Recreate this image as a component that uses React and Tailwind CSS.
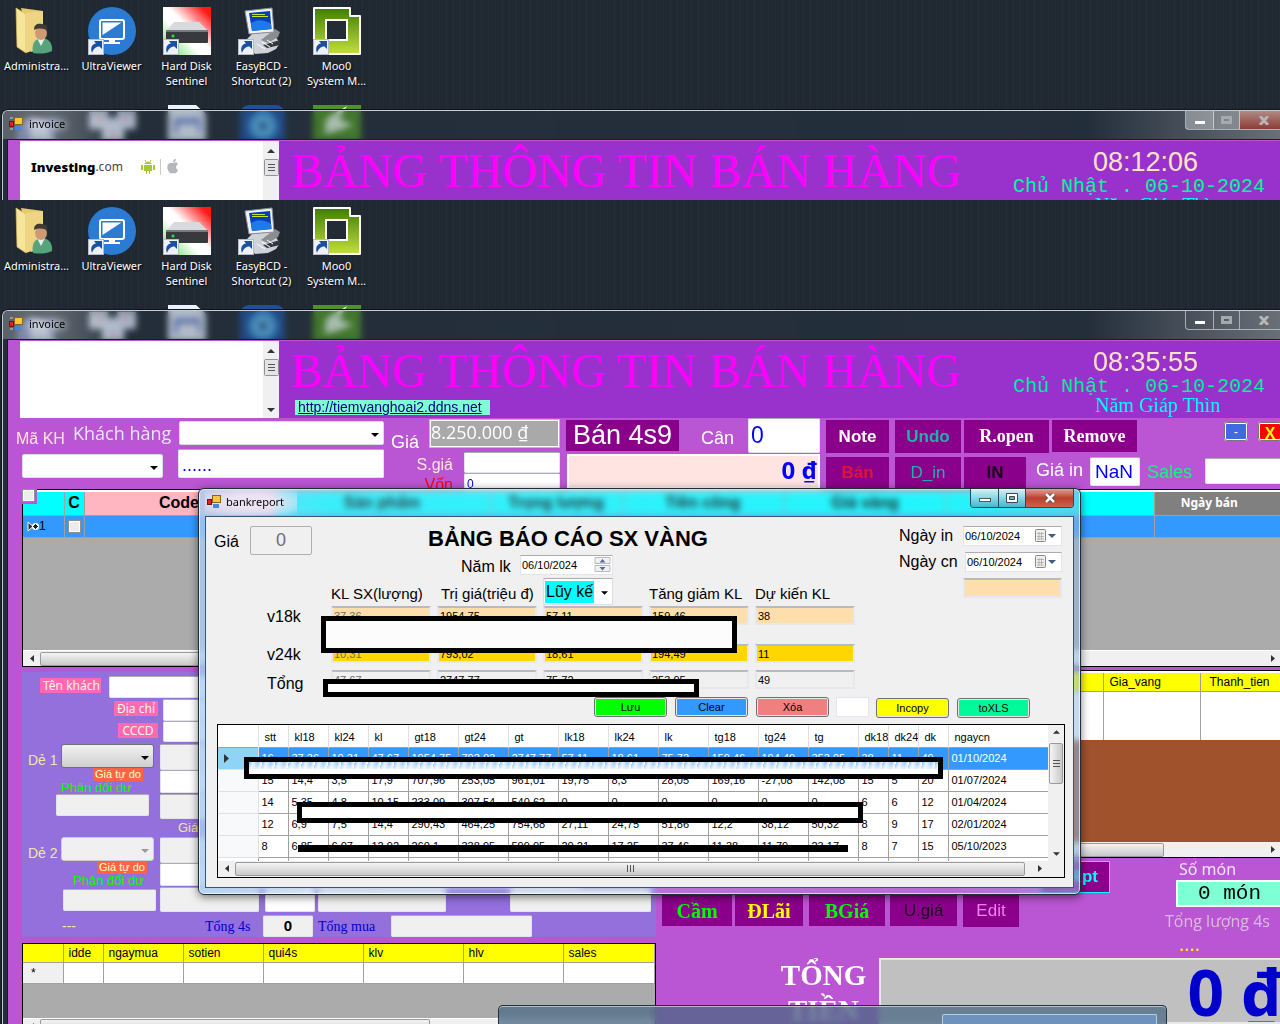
import React from "react";

const SANS = "font-['Liberation_Sans',Arial,sans-serif]";
const FIELD = "min-w-0 rounded-[2px] border border-[#e3e3ec] border-t-[#abadb3] outline-none";

function ShortcutArrow() {
  return (
    <g>
      <rect x="0.5" y="32.5" width="15" height="15" fill="#eef2f8" stroke="#b6bcc6" />
      <path d="M4 46c-2-5 0-9 4-9.500l-2-2.500h8v8l-2.500-2.500c-4 0-6 2.500-7.500 6.500z" fill="#1d4fa0" />
    </g>
  );
}

function FolderIcon() {
  return (
    <svg viewBox="0 0 48 48" className="size-12">
      <path d="M8 1l22 3v38l-12 3z" fill="#e8ca6c" />
      <path d="M3 1l10 6v39L4 40z" fill="#f8e59c" stroke="#d9b95a" strokeWidth=".7" />
      <path d="M13 6l17-2v36l-17 6z" fill="#eed583" />
      <path d="M20 46c-2-10 3-15 9-15s11 5 10 13c-6 3-13 3-19 2z" fill="#57a37c" />
      <path d="M24 31l4 8 4-8z" fill="#e8efe9" />
      <ellipse cx="28" cy="26" rx="6" ry="7" fill="#cf9a72" />
      <path d="M21 23c0-6 4-7 8-6 4 0 6 3 5 7-3-3-9-3-13-1z" fill="#3f3c38" />
    </svg>
  );
}

function ViewerIcon() {
  return (
    <svg viewBox="0 0 48 48" className="size-12">
      <circle cx="24" cy="24" r="24" fill="#2b7bd3" />
      <rect x="12" y="13" width="24" height="19" rx="2" fill="#2b7bd3" stroke="#fff" strokeWidth="2" />
      <path d="M14.500 15.500h19L14.500 28z" fill="#fff" />
      <path d="M21 32h6v3h5v2H16v-2h5z" fill="#fff" />
      <ShortcutArrow />
    </svg>
  );
}

function DiskIcon({ id }) {
  return (
    <svg viewBox="0 0 48 48" className="size-12">
      <defs>
        <linearGradient id={id} x1="0" y1="1" x2="1" y2="0">
          <stop offset="0" stopColor="#4de04d" />
          <stop offset=".4" stopColor="#fff" />
          <stop offset=".55" stopColor="#fff" />
          <stop offset=".9" stopColor="#ff1818" />
        </linearGradient>
      </defs>
      <rect width="48" height="48" fill={`url(#${id})`} />
      <path d="M11 15h25l9 9H3z" fill="#d8dadd" />
      <rect x="3" y="23" width="42" height="13" rx="1" fill="#37393c" />
      <rect x="3" y="23" width="42" height="2" fill="#777b80" />
      <circle cx="10" cy="29" r="1.500" fill="#25e83c" />
      <ShortcutArrow />
    </svg>
  );
}

function PcIcon() {
  return (
    <svg viewBox="0 0 48 48" className="size-12">
      <path d="M7 34l7-7 20-2 8 11-4 6-8 4-13 1z" fill="#cfd2d8" />
      <path d="M23 33l14-11 5 3-2 5-10 6z" fill="#8b8d90" />
      <path d="M25 38l17-5v5l-13 3z" fill="#34373c" />
      <path d="M7 4l27-3 2 24-25 2z" fill="#f0f2f6" stroke="#8c9098" />
      <path d="M11 6l21-2 1.500 18-19.500 2z" fill="#0b3fb4" />
      <path d="M13 16q9-6 20 1l.500 5-19.500 2z" fill="#1c7be8" />
      <path d="M14 9.500h16M14 7.500h13" stroke="#c9e23a" strokeWidth="1.200" />
      <path d="M19 37l8 5M24 35l8 5M29 33l6 4" stroke="#fff" />
      <ShortcutArrow />
    </svg>
  );
}

function MooIcon({ id }) {
  return (
    <svg viewBox="0 0 48 48" className="size-12">
      <defs>
        <linearGradient id={id} x1="0" y1="0" x2="0" y2="1">
          <stop offset="0" stopColor="#3f7d06" />
          <stop offset="1" stopColor="#c3e03c" />
        </linearGradient>
      </defs>
      <path d="M1 1h36v8h10v38H11V36H1z" fill={`url(#${id})`} stroke="#fff" strokeWidth="2" strokeLinejoin="round" />
      <rect x="13" y="13" width="21" height="20" fill="#222b36" stroke="#fff" strokeWidth="2" />
      <ShortcutArrow />
    </svg>
  );
}

/* Icons of the second desktop row, partly hidden by the window's title bar. */
function LowerIcons() {
  return (
    <svg width="380" height="36" viewBox="0 0 380 36" aria-hidden="true">
      <path d="M20 14h38l-4 22H16z" fill="#7f8fd6" opacity=".75" />
      <path d="M30 12l14 4 10 20H30z" fill="#dfe6fb" opacity=".8" />
      <path d="M89 7h19v6h9V7h19v17h-12v12h-22V24H89z" fill="#dfe9fb" />
      <path d="M96 14h8M121 14h8M109 30h8" stroke="#e89aab" strokeWidth="3" />
      <path d="M168 0h28l10 9v27h-38z" fill="#eaf2ff" />
      <path d="M174 13h27v16h-27z" fill="#7f95d6" />
      <path d="M178 19h20v10h-20z" fill="#eef3fd" />
      <rect x="240" y="0" width="45" height="44" rx="9" fill="#1f4f9e" />
      <circle cx="263" cy="21" r="15" fill="#3c9be0" />
      <circle cx="263" cy="21" r="7" fill="none" stroke="#86cff5" strokeWidth="3" />
      <circle cx="263" cy="21" r="3" fill="#1c4a78" />
      <rect x="313" y="0" width="48" height="40" fill="#4f9420" />
      <path d="M347 1l-8 13 14 6-13 5-15 4 1-15z" fill="#e3fbe0" />
    </svg>
  );
}

function Desktop({ children, className, id, time, closeStyle, logo }) {
  const icons = [
    [["Administra..."], <FolderIcon key="f" />],
    [["UltraViewer"], <ViewerIcon key="v" />],
    [["Hard Disk", "Sentinel"], <DiskIcon key="d" id={id + "disk"} />],
    [["EasyBCD -", "Shortcut (2)"], <PcIcon key="p" />],
    [["Moo0", "System M..."], <MooIcon key="m" id={id + "moo"} />],
  ];
  return (
    <section
      className={`relative overflow-hidden bg-[repeating-linear-gradient(90deg,#1f2831_0px,#222b35_2px,#1d252e_3px,#242d37_5px,#1f2831_7px)] ${className}`}
    >
      <div className="-ml-px flex pt-[7px]">
        {icons.map(([lines, icon]) => (
          <div key={lines[0]} className="flex w-[75px] flex-col items-center">
            {icon}
            <span className="mt-[3px] text-center font-['Noto_Sans',sans-serif] text-[11px] leading-[15px] whitespace-nowrap text-white [text-shadow:1px_1px_2px_#000]">
              {lines.map((l) => (<span key={l} className="block">{l}</span>))}
            </span>
          </div>
        ))}
      </div>
      <div className="absolute top-[105px] left-0">
        <LowerIcons />
      </div>
      <div className="absolute top-[110px] right-0 bottom-0 left-[2px] flex flex-col rounded-tl-md border-t border-l border-[#c5ccd2] bg-[#2b3b4b]/30 pl-[4px] shadow-[0_0_0_1px_#10151b] backdrop-blur-[3px]">
        <header className="-ml-[4px] flex h-[28px] shrink-0 items-start rounded-tl-md bg-[linear-gradient(90deg,#ffffff40,#ffffff48_50px,#2d425500_130px,#22324022_85%,#ffffff50)] pl-[6px]">
          <svg width="14" height="14" viewBox="0 0 14 14" className="mt-[6px]" aria-hidden="true">
            <rect x="5.500" y=".5" width="8" height="7" fill="#f6c63c" stroke="#8d6414" />
            <rect x=".5" y="4.500" width="4" height="5" fill="#d22" stroke="#711" />
            <rect x="6" y="9" width="6" height="4" fill="#4a83e0" />
            <path d="M1 1h3M1 12h3" stroke="#ccc" />
          </svg>
          <h2 className="mt-[5px] ml-[6px] font-['Noto_Sans',sans-serif] text-[11px] leading-4 text-black [text-shadow:0_0_8px_#fff,0_0_8px_#fff]">
            invoice
          </h2>
          <div className="-mr-2 ml-auto flex h-[19px] rounded-b-[4px] border border-t-0 border-[#d0d5da]/70">
            <button aria-label="Minimize" className={`flex w-7 items-end justify-center border-r border-white/50 pb-[5px] ${closeStyle ? "bg-white/35" : ""}`}>
              <span className="h-[3px] w-[10px] bg-white" />
            </button>
            <button aria-label="Maximize" className={`flex w-[26px] items-center justify-center border-r border-white/50 ${closeStyle ? "bg-white/25" : ""}`}>
              <span className="h-2 w-[11px] border-[3px] border-[#a4aab0]" />
            </button>
            <button aria-label="Close" className={`flex w-[47px] items-center justify-center ${closeStyle}`}>
              <svg width="12" height="9" viewBox="0 0 12 9"><path d="M2 0l8 9M10 0L2 9" stroke="#b8b4b6" strokeWidth="3" /></svg>
            </button>
          </div>
        </header>
        <div className="flex min-h-0 flex-1 flex-col border-t border-l border-[#1b1b2b] bg-[#ba55d3] pt-px">
          <div className="flex h-[77px] shrink-0 pl-3">
            <div className="flex w-[259px] shrink-0 bg-white">
              <div className="flex-1">{logo}</div>
              <div className="flex w-4 flex-col items-center bg-[#f0f0f0] py-[5px]">
                <svg width="8" height="5" viewBox="0 0 8 5" className="mt-[2px]"><path d="M0 5l4-4 4 4z" fill="#333" /></svg>
                <svg width="15" height="17" viewBox="0 0 15 17" className="mt-[6px]">
                  <rect x=".5" y=".5" width="14" height="16" rx="1" fill="#e4e4e6" stroke="#929292" />
                  <path d="M4 5.500h7M4 8.500h7M4 11.500h7" stroke="#555" />
                </svg>
                <svg width="8" height="5" viewBox="0 0 8 5" className="mt-auto"><path d="M0 0h8L4 4z" fill="#333" /></svg>
              </div>
            </div>
            <div className="flex min-w-0 flex-1 bg-[#9932cc] pl-3">
              <div className="shrink-0">
                <h1 className="font-['Liberation_Serif',serif] text-[48px] leading-[59px] whitespace-nowrap text-[#ff00ff]">BẢNG THÔNG TIN BÁN HÀNG</h1>
                <a href="http://tiemvanghoai2.ddns.net" className={`ml-1 block w-[195px] bg-[#7fffd4] pl-[3px] text-sm leading-[15px] text-[#000080] underline ${SANS}`}>
                  http://tiemvanghoai2.ddns.net
                </a>
              </div>
              <div className="ml-auto w-[267px] shrink-0 whitespace-nowrap">
                <p className={`pt-[6px] pl-20 text-[27px] leading-[30px] text-[#ffe4c4] ${SANS}`}>{time}</p>
                <p className="font-['Liberation_Mono',monospace] text-[20px] leading-[19px] text-[#00fa9a]">Chủ Nhật . 06-10-2024</p>
                <p className="pl-[82px] font-['Liberation_Serif',serif] text-[20px] leading-[18px] text-[#00ffff]">Năm Giáp Thìn</p>
              </div>
            </div>
          </div>
          {children}
        </div>
      </div>
    </section>
  );
}

function InvestingLogo() {
  return (
    <div className="flex items-center pt-[14px] pl-[11px]">
      <span className="font-['Noto_Sans',sans-serif] text-[13px] leading-[24px] font-black text-black">Investing</span>
      <span className="font-['Noto_Sans',sans-serif] text-[12px] leading-6 text-[#444]">.com</span>
      <svg width="40" height="16" viewBox="0 0 40 16" className="ml-[18px]" aria-hidden="true">
        <path d="M3 5q4-5 8 0zM3 6h8v6H9v3H8v-3H6v3H5v-3H3zM0 6h2v5H0zM12 6h2v5h-2z" fill="#a4c639" />
        <path d="M4 1l1 2M10 1L9 3" stroke="#a4c639" />
        <path d="M19.500 0v16" stroke="#ccc" />
        <path d="M32 4c2-1 4-1 5 1-3 2-2 5 0 6-1 3-3 4-5 3-2 1-4 0-5-3-2-5 1-8 5-7zM32 3c0-2 1-3 3-3 0 2-1 3-3 3z" fill="#b4b8bc" />
      </svg>
    </div>
  );
}

function Drop({ label, className, arrow = "#000", children, disabled }) {
  return (
    <div className={`relative ${className}`}>
      <select aria-label={label} disabled={disabled} className="absolute inset-0 h-full w-full appearance-none bg-transparent pl-1 outline-none">
        {children || <option></option>}
      </select>
      <svg width="8" height="4" viewBox="0 0 8 4" className="pointer-events-none absolute top-1/2 right-1"><path d="M0 0h8L4 4z" fill={arrow} /></svg>
    </div>
  );
}

function HScroll({ thumb, left = true, right = true, grip }) {
  return (
    <div className="flex h-[15px] shrink-0 items-center bg-[#f0f0f0]">
      <span className="flex w-[17px] shrink-0 justify-center">
        {left && <svg width="4" height="7" viewBox="0 0 4 7"><path d="M4 0v7L0 3.500z" fill="#333" /></svg>}
      </span>
      <div className={`flex h-[14px] items-center justify-center rounded-[2px] border border-[#9a9a9a] bg-linear-to-b from-[#f4f4f4] to-[#c9c9cb] ${thumb}`}>
        {grip && <svg width="7" height="7" viewBox="0 0 7 7"><path d="M.5 0v7M3.500 0v7M6.500 0v7" stroke="#555" /></svg>}
      </div>
      <span className="ml-auto flex w-[15px] shrink-0 justify-center">
        {right && <svg width="4" height="7" viewBox="0 0 4 7"><path d="M0 0v7l4-3.500z" fill="#333" /></svg>}
      </span>
    </div>
  );
}

const TOOL = "flex items-center justify-center bg-[#8b008b] whitespace-nowrap";

function Toolbar() {
  return (
    <div className={`flex h-[71px] shrink-0 pl-2 ${SANS}`}>
      <div className="w-[368px] shrink-0">
        <div className="flex h-[31px] items-start pt-[3px]">
          <label className="w-[57px] pt-[9px] text-[16px] leading-[18px] text-[#ffe4e1]">Mã KH</label>
          <label className="w-[106px] pt-[2px] font-['Open_Sans',sans-serif] text-[18px] leading-[20px] whitespace-nowrap text-[#e6e6fa]">Khách hàng</label>
          <Drop label="Khách hàng" className="h-6 flex-1 rounded-[2px] border border-[#dcdce6] bg-white" />
        </div>
        <div className="flex pl-[6px]">
          <Drop label="Mã KH" className="mt-[5px] h-6 w-[141px] rounded-[2px] border border-[#dcdce6] bg-white" />
          <input aria-label="Ghi chú" defaultValue="......" className={`ml-[15px] h-[29px] flex-1 bg-white pt-[4px] pl-[3px] text-[18px] text-[#0000ff] ${FIELD}`} />
        </div>
      </div>
      <div className="ml-[7px] w-[169px] shrink-0">
        <div className="flex pt-px">
          <label htmlFor="gia" className="w-[38px] pt-[13px] text-[18px] leading-5 text-white">Giá</label>
          <input id="gia" defaultValue="8.250.000 ₫" className="h-[29px] min-w-0 flex-1 border-2 border-white bg-[#a9a9a9] pb-[3px] font-['Open_Sans','Noto_Sans',sans-serif] text-[18px] text-white outline-1 -outline-offset-1 outline-[#bbb]" />
        </div>
        <div className="flex h-[21px]">
          <label htmlFor="sgia" className="w-[73px] pr-[11px] text-right text-[16px] leading-[26px] text-[#ffe4e1]">S.giá</label>
          <input id="sgia" className={`flex-1 bg-white ${FIELD}`} />
        </div>
        <div className="flex h-[21px]">
          <label htmlFor="von" className="w-[73px] pr-[11px] text-right text-[16px] leading-[24px] text-[#ff0000]">Vốn</label>
          <input id="von" defaultValue="0" className={`flex-1 bg-white pl-[2px] text-xs text-[#0000ff] ${FIELD}`} />
        </div>
      </div>
      <div className="ml-[6px] w-[254px] shrink-0">
        <div className="flex">
          <button className={`mt-[2px] h-[31px] w-[113px] text-[27px] text-white ${TOOL}`}>Bán 4s9</button>
          <label htmlFor="can" className="w-[69px] pt-[10px] pl-[22px] text-[18px] leading-5 text-white">Cân</label>
          <input id="can" defaultValue="0" className={`h-[35px] flex-1 bg-white pl-[2px] text-[23px] text-[#0000ff] ${FIELD}`} />
        </div>
        <input aria-label="Thành tiền" defaultValue="0 ₫" className="mt-px ml-px h-[35px] w-[253px] border-2 border-white bg-[#ffe4e1] pr-px pb-1 text-right font-['Noto_Sans',sans-serif] text-[24px] font-bold text-[#0000ff]" />
      </div>
      <div className="ml-[6px] min-w-0 flex-1">
        <div className="flex h-[39px] items-start pt-[2px]">
          <button className={`h-[33px] w-[63px] shrink-0 text-[17px] font-bold text-white ${TOOL}`}>Note</button>
          <button className={`ml-[6px] h-[33px] w-[66px] shrink-0 text-[17px] font-bold text-[#20b2aa] ${TOOL}`}>Undo</button>
          <button className={`ml-[3px] h-[33px] w-[85px] shrink-0 font-['Liberation_Serif',serif] text-[18px] font-bold text-white ${TOOL}`}>R.open</button>
          <button className={`ml-[3px] h-[32px] w-[85px] shrink-0 font-['Liberation_Serif',serif] text-[18px] font-bold text-white ${TOOL}`}>Remove</button>
          <button className="mt-[2px] ml-auto flex h-[19px] w-6 shrink-0 items-center justify-center rounded-[3px] border-2 border-white bg-[#4169e1] text-xs text-white outline-1 -outline-offset-1 outline-[#777]">-</button>
          <button className="mt-[2px] -mr-[2px] ml-[10px] flex h-[19px] w-6 shrink-0 items-center justify-center rounded-[3px] border-2 border-white bg-[#ff0000] pt-1 text-[16px] font-bold text-[#ffff00] outline-1 -outline-offset-1 outline-[#777]">X</button>
        </div>
        <div className="flex">
          <button className={`h-8 w-[63px] shrink-0 text-[17px] font-bold text-[#dc143c] ${TOOL}`}>Bán</button>
          <button className={`ml-[6px] h-8 w-[66px] shrink-0 text-[17px] text-[#20b2aa] ${TOOL}`}>D_in</button>
          <button className={`ml-[3px] h-8 w-[62px] shrink-0 text-[17px] font-bold text-[#1c0020] ${TOOL}`}>IN</button>
          <label htmlFor="giain" className="w-[64px] shrink-0 pl-[10px] text-[18px] leading-[27px] whitespace-nowrap text-white">Giá in</label>
          <input id="giain" defaultValue="NaN" className={`h-[29px] w-[50px] bg-white pl-1 text-[19px] text-[#0000ff] ${FIELD}`} />
          <label htmlFor="sales" className="w-[65px] shrink-0 pl-[7px] text-[18px] leading-[31px] text-[#00ff7f]">Sales</label>
          <input id="sales" className={`mt-px -mr-1 h-[26px] flex-1 bg-white ${FIELD}`} />
        </div>
      </div>
    </div>
  );
}

function OrdersGrid() {
  const th = "border-r border-[#a0a0a0] text-center font-bold";
  return (
    <div className="relative ml-[14px] flex h-[178px] shrink-0 flex-col border border-r-0 border-black bg-[#ababab]">
      <table className={`w-full table-fixed border-collapse text-[12px] ${SANS}`}>
        <colgroup>
          <col className="w-[41px]" /><col className="w-[20px]" /><col className="w-[190px]" /><col className="w-[216px]" />
          <col className="w-[132px]" /><col className="w-[162px]" /><col className="w-[162px]" /><col className="w-[208px]" /><col />
        </colgroup>
        <thead>
          <tr className="h-6 border-t-2 border-b border-t-white border-b-[#a0a0a0] bg-[#00ffff]">
            <th className={th}></th>
            <th className={`text-[16px] leading-5 ${th}`}>C</th>
            <th className={`bg-[#ffb6c1] text-[16px] leading-5 ${th}`}>Code</th>
            <th className={`text-[16px] leading-5 ${th}`}>Sản phẩm</th>
            <th className={`text-[16px] leading-5 ${th}`}>Trọng lượng</th>
            <th className={`text-[16px] leading-5 ${th}`}>Tiền công</th>
            <th className={`text-[16px] leading-5 ${th}`}>Giá vàng</th>
            <th className={th}></th>
            <th className="border-l border-white bg-[#808080] pr-4 text-center font-['Noto_Sans',sans-serif] font-bold text-white">Ngày bán</th>
          </tr>
        </thead>
        <tbody>
          <tr className="h-[22px] border-b border-[#a0a0a0] bg-[#3399ff]">
            <td className="border-r border-[#a0a0a0] pl-1">
              <span className="flex items-center">
                <svg width="12" height="9" viewBox="0 0 12 9"><path d="M1 0l5 4.500L1 9z" fill="#333" stroke="#fff" /><circle cx="8.500" cy="4.500" r="3.500" fill="#fff" /><path d="M8.500 2v5M6 4.500h5M7 3l3 3M10 3L7 6" stroke="#222" /></svg>
                1
              </span>
            </td>
            <td className="border-r border-[#a0a0a0] px-[3px]"><input type="checkbox" aria-label="Chọn dòng" className="block size-[13px] appearance-none border border-[#8e8f8f] bg-[#ececec] ring-1 ring-white ring-inset" /></td>
            <td className="border-r border-[#a0a0a0]"></td><td></td><td></td><td></td><td></td>
            <td className="border-r border-[#a0a0a0]"></td><td></td>
          </tr>
        </tbody>
      </table>
      <input type="checkbox" aria-label="Chọn tất cả" className="absolute -top-px -left-px size-[13px] appearance-none border border-[#8e8f8f] bg-[#ececec] shadow-[1px_1px_0_1px_#ba55d3] ring-1 ring-white ring-inset" />
      <div className="mt-auto border-t border-white"><HScroll thumb="w-[820px]" /></div>
    </div>
  );
}

const OFF = `bg-[#f0f0f0] ${FIELD}`;
const TAG = "bg-[#ff69b4] px-[3px] text-center font-['Noto_Sans',sans-serif] text-[12px] leading-[15px] whitespace-nowrap text-[#fff5e0]";

function TradeBlock({ n, disabled, shift, last }) {
  return (
    <div className="flex h-[76px]">
      <div className="w-[138px] shrink-0 pt-px">
        <div className="flex items-start pl-[6px]">
          <span className="w-[33px] text-[14px] leading-[33px] whitespace-nowrap text-[#eee8aa] h-6">Dẻ {n}</span>
          <Drop label={`Dẻ ${n}`} disabled={disabled} arrow={disabled ? "#999" : "#000"} className={`h-6 w-[93px] rounded-[3px] border ${disabled ? "border-[#ccc] bg-[#f0f0f0]" : "border-[#707070] bg-linear-to-b from-[#f2f2f2] to-[#cfcfcf]"}`} />
        </div>
        <span className={`block w-[50px] bg-[#ff6347] text-center text-[11px] leading-[13px] whitespace-nowrap text-[#ffffc0] ${shift ? "ml-[75px]" : "ml-[71px]"}`}>Giá tự do</span>
        <span className={`block text-[13px] leading-[13px] text-[#00ff00] ${shift ? "ml-[51px]" : "ml-[39px]"}`}>Phân đổi dư</span>
        <input aria-label={`Kết quả ${n}`} disabled className={`block h-[22px] w-[93px] ${shift ? "mt-[2px] ml-[41px]" : "ml-[34px]"} ${OFF}`} />
      </div>
      <div className="flex-1 pt-px">
        <input aria-label={`Trọng lượng ${n}`} disabled className={`block h-[26px] w-[420px] ${OFF}`} />
        <input aria-label={`Giá ${n}`} className={`block h-[23px] w-[420px] bg-white ${FIELD}`} />
        {last ? (
          <div className="mt-px flex">
            <input aria-label="Tổng vàng" disabled className={`h-[25px] w-[99px] ${OFF}`} />
            <input aria-label="Tuổi" className={`ml-[6px] h-[25px] w-[50px] bg-white ${FIELD}`} />
            <input aria-label="Giá trị" disabled className={`ml-[3px] h-[25px] w-[128px] ${OFF}`} />
            <input aria-label="Thành tiền dẻ" disabled className={`ml-[64px] h-[25px] w-[141px] ${OFF}`} />
          </div>
        ) : (
          <input aria-label={`Thành tiền ${n}`} disabled className={`mt-px block h-[25px] w-[420px] ${OFF}`} />
        )}
      </div>
    </div>
  );
}

function CustomerPanel() {
  return (
    <div className={`h-[265px] shrink-0 bg-[#9370db] pt-1 ${SANS}`}>
      <div className="flex h-[23px] items-start pl-[18px]">
        <label htmlFor="ten" className={`mt-[2px] w-[61px] ${TAG}`}>Tên khách</label>
        <input id="ten" className={`ml-2 h-[22px] w-[400px] bg-white ${FIELD}`} />
      </div>
      <div className="flex h-[22px] items-start pl-[92px]">
        <label htmlFor="diachi" className={`mt-[2px] w-[44px] ${TAG}`}>Địa chỉ</label>
        <input id="diachi" className={`ml-[5px] h-[22px] w-[400px] bg-white ${FIELD}`} />
      </div>
      <div className="flex h-[22px] items-start pl-[96px]">
        <label htmlFor="cccd" className={`mt-[2px] w-[40px] ${TAG}`}>CCCD</label>
        <input id="cccd" className={`ml-[5px] h-[21px] w-[400px] bg-white ${FIELD}`} />
      </div>
      <TradeBlock n={1} />
      <p className="h-[17px] pl-[156px] text-[13px] leading-[17px] text-[#eee8aa]">Giá</p>
      <TradeBlock n={2} disabled shift last />
      <div className="flex h-[25px] items-center pt-[3px] pl-10 font-['Liberation_Serif',serif] text-[14px] text-[#0000cd]">
        <span className={`w-[143px] text-[#eee8aa] ${SANS}`}>---</span>
        <label htmlFor="tong4s" className="w-[58px] whitespace-nowrap">Tổng 4s</label>
        <input id="tong4s" defaultValue="0" className={`h-[22px] w-[50px] text-center text-[15px] font-bold text-black ${SANS} ${OFF}`} />
        <label htmlFor="tongmua" className="w-[78px] pl-[5px] whitespace-nowrap">Tổng mua</label>
        <input id="tongmua" className={`h-[22px] w-[141px] ${OFF}`} />
      </div>
    </div>
  );
}

function PledgeTable() {
  const cols = ["idde", "ngaymua", "sotien", "qui4s", "klv", "hlv", "sales"];
  return (
    <div className="mt-[6px] flex min-h-0 flex-1 flex-col overflow-hidden border border-b-0 border-black bg-[#ababab]">
      <table className={`w-full table-fixed border-collapse text-[12px] ${SANS}`}>
        <colgroup>
          <col className="w-10" /><col className="w-10" /><col className="w-20" /><col className="w-20" />
          <col className="w-[100px]" /><col className="w-[100px]" /><col className="w-[100px]" /><col />
        </colgroup>
        <thead>
          <tr className="h-[18px] border-b border-[#a0a0a0] bg-[#ffff00]">
            <th className="border-r border-[#a0a0a0]"></th>
            {cols.map((c) => (<th key={c} className="border-r border-[#a0a0a0] pl-[5px] text-left leading-4 font-normal">{c}</th>))}
          </tr>
        </thead>
        <tbody>
          <tr className="h-[21px] border-b border-[#a0a0a0] bg-white">
            <td className="border-r border-[#a0a0a0] bg-[#f0f0f0] pl-2">*</td>
            {cols.map((c) => (<td key={c} className="border-r border-[#a0a0a0]"></td>))}
          </tr>
        </tbody>
      </table>
      <div className="mt-[34px] border-t border-white"><HScroll thumb="w-[390px]" /></div>
    </div>
  );
}

function ItemsTable() {
  return (
    <div className="-mt-[2px] flex h-[188px] shrink-0 flex-col border border-r-0 border-black bg-[#a0522d]">
      <table className={`w-full table-fixed border-collapse text-[12px] ${SANS}`}>
        <colgroup><col className="w-[442px]" /><col className="w-[97px]" /><col /></colgroup>
        <thead>
          <tr className="h-[19px] border-t-2 border-b border-t-white border-b-[#a0a0a0] bg-[#ffff00] text-left">
            <th className="border-r border-[#a0a0a0]"></th>
            <th className="border-r border-[#a0a0a0] pl-[6px] leading-4 font-normal">Gia_vang</th>
            <th className="pl-[9px] leading-4 font-normal">Thanh_tien</th>
          </tr>
        </thead>
        <tbody>
          <tr className="h-[49px] bg-white"><td className="border-r border-[#a0a0a0]"></td><td className="border-r border-[#a0a0a0]"></td><td></td></tr>
        </tbody>
      </table>
      <div className="mt-auto"><HScroll thumb="w-[486px]" /></div>
    </div>
  );
}

function Actions() {
  return (
    <>
      <div className="flex h-[100px] shrink-0">
        <div className="w-[450px] shrink-0">
          <div className="flex h-[37px] justify-end pt-[3px]">
            <button className={`flex h-8 w-[70px] items-center justify-end border border-[#00ffff] bg-[#8b008b] pr-[11px] text-[17px] font-bold text-[#00ffff] ${SANS}`}>Rpt</button>
          </div>
          <div className="flex items-start pl-[2px] font-['Liberation_Serif',serif] text-[20px] font-bold">
            <button className={`h-[31px] w-[70px] text-[#00ff00] ${TOOL}`}>Cầm</button>
            <button className={`ml-[3px] h-[31px] w-[68px] text-[#ffff00] ${TOOL}`}>ĐLãi</button>
            <button className={`ml-[6px] h-[31px] w-[76px] text-[#00ff00] ${TOOL}`}>BGiá</button>
            <button className={`ml-[5px] h-[31px] w-[67px] text-[17px] font-normal text-[#1c0020] ${TOOL} ${SANS}`}>U.giá</button>
            <button className={`ml-[6px] h-[32px] w-[56px] text-[17px] font-normal text-[#ee82ee] ${TOOL} ${SANS}`}>Edit</button>
          </div>
        </div>
        <div className="ml-auto w-[115px] shrink-0 font-['Open_Sans',sans-serif] text-[16px] whitespace-nowrap">
          <label htmlFor="somon" className="block pl-[14px] font-['Noto_Sans',sans-serif] leading-[22px] text-[#f0e6fa]">Số món</label>
          <input id="somon" defaultValue="0 món" className="ml-[11px] block h-[27px] w-[110px] border-2 border-white bg-[#7fffd4] pl-[20px] font-['Liberation_Mono',monospace] text-[21px]" />
          <p className="leading-[28px] text-[#d8bfd8]">Tổng lượng 4s</p>
          <p className="pl-[14px] text-[20px] leading-[18px] text-[#ffff00]">....</p>
        </div>
      </div>
      <div className="flex min-h-0 flex-1">
        <p className="w-[219px] shrink-0 pl-[108px] text-center font-['Liberation_Serif',serif] text-[29px] leading-[35px] font-bold text-white">TỔNG TIỀN</p>
        <div className="-mr-1 min-w-0 flex-1 overflow-hidden border-2 border-[#e8e8e8] bg-[#c0c0c0] text-right">
          <output className="block font-['Noto_Sans',sans-serif] text-[64px] leading-[64px] font-bold text-[#0000cd]">0 ₫</output>
        </div>
      </div>
    </>
  );
}

function DateField({ label, className, spin }) {
  return (
    <div className={`flex h-5 items-center border border-[#e0e4ec] border-t-[#abadb3] bg-white ${className}`}>
      <input id={label} defaultValue="06/10/2024" className="min-w-0 flex-1 pl-px text-[11px] outline-none" />
      {spin ? (
        <svg width="17" height="16" viewBox="0 0 17 16" className="mr-[1px]">
          <path d="M1 .5h15v6H1zM1 8.500h15v6H1z" fill="#f0f0f0" stroke="#bbb" />
          <path d="M5.500 5.500L8.500 2l3 3.500zM5.500 10L8.500 13.500l3-3.500z" fill="#5767b0" />
        </svg>
      ) : (
        <svg width="22" height="14" viewBox="0 0 22 14" className="mr-[4px]">
          <rect x=".5" y=".5" width="10" height="12" rx="1" fill="#f2f0ee" stroke="#8a8580" />
          <path d="M2 4.500h7M2 7.500h7M2 10h7M4 3v8M6.500 3v8" stroke="#aaa" strokeWidth=".8" />
          <path d="M13 5h8l-4 4z" fill="#3f5b86" />
        </svg>
      )}
    </div>
  );
}

const reportRows = [
  ["16", "37,36", "10,31", "47,67", "1954,75", "793,02", "2747,77", "57,11", "18,61", "75,72", "159,46", "194,49", "353,95", "38", "11", "49", "01/10/2024"],
  ["15", "14,4", "3,5", "17,9", "707,96", "253,05", "961,01", "19,75", "8,3", "28,05", "169,16", "-27,08", "142,08", "15", "5", "20", "01/07/2024"],
  ["14", "5,35", "4,8", "10,15", "233,09", "307,54", "540,62", "0", "0", "0", "0", "0", "0", "6", "6", "12", "01/04/2024"],
  ["12", "6,9", "7,5", "14,4", "290,43", "464,25", "754,68", "27,11", "24,75", "51,86", "12,2", "38,12", "50,32", "8", "9", "17", "02/01/2024"],
  ["8", "6,85", "6,07", "12,92", "260,1", "338,95", "599,05", "20,21", "17,25", "37,46", "11,38", "11,79", "23,17", "8", "7", "15", "05/10/2023"],
];
const reportCols = ["stt", "kl18", "kl24", "kl", "gt18", "gt24", "gt", "lk18", "lk24", "lk", "tg18", "tg24", "tg", "dk18", "dk24", "dk", "ngaycn"];

const sums = [
  ["v18k", "bg-[#ffdead]", ["37,36", "1954,75", "57,11", "159,46", "38"]],
  ["v24k", "bg-[#ffd700]", ["10,31", "793,02", "18,61", "194,49", "11"]],
  ["Tổng", "bg-[#f0f0f0]", ["47,67", "2747,77", "75,72", "353,95", "49"]],
];

const BTN = "h-5 w-[73px] rounded-[3px] border-2 border-[#e8e8e8] text-[11px] leading-none outline-1 -outline-offset-1 outline-[#707070]";

function ReportDialog() {
  return (
    <div role="dialog" aria-label="bankreport" className={`absolute top-[288px] left-[198px] flex h-[407px] w-[883px] flex-col rounded-[6px] border border-[#1f2c3a] bg-[linear-gradient(90deg,#a9cdf0cc,#a9cdf055_15%,#a9cdf033_85%,#90b8e088)] px-[6px] pb-[6px] shadow-[inset_0_0_0_1px_#ffffffaa,0_2px_8px_#0008] backdrop-blur-[3px] ${SANS}`}>
      <header className="flex h-[27px] shrink-0 items-start">
        <div className="flex h-[26px] w-[92px] items-center bg-[radial-gradient(ellipse,#ede4f3_30%,#ede4f388_70%,transparent)] pl-[2px]">
          <svg width="14" height="14" viewBox="0 0 14 14" aria-hidden="true">
            <rect x="5.500" y=".5" width="8" height="7" fill="#f6c63c" stroke="#8d6414" />
            <rect x=".5" y="4.500" width="4" height="5" fill="#d22" stroke="#711" />
            <rect x="6" y="9" width="6" height="4" fill="#4a83e0" />
          </svg>
          <h2 className="ml-[5px] font-['Noto_Sans',sans-serif] text-[11px]">bankreport</h2>
        </div>
        <div className="ml-auto flex h-[19px] rounded-b-[4px] border border-t-0 border-[#2a4858]">
          <button aria-label="Minimize" className="flex w-7 items-end justify-center border-r border-[#2a4858] bg-linear-to-b from-white/70 to-[#4f98b0]/60 pb-[5px]"><span className="h-[4px] w-[12px] border border-[#555] bg-white" /></button>
          <button aria-label="Maximize" className="flex w-[27px] items-center justify-center border-r border-[#2a4858] bg-linear-to-b from-white/70 to-[#4f98b0]/60">
            <svg width="12" height="10" viewBox="0 0 12 10"><path d="M.5.500h11v9H.5z" fill="#fff" stroke="#445" /><path d="M3.500 3.500h5v3h-5z" fill="#7ab" stroke="#445" /></svg>
          </button>
          <button aria-label="Close" className="flex w-[47px] items-center justify-center rounded-br-[3px] bg-linear-to-b from-[#e0a098] via-[#b8412c] to-[#d0604a]">
            <svg width="12" height="10" viewBox="0 0 12 10"><path d="M2 1l8 8M10 1L2 9" stroke="#444" strokeWidth="4" /><path d="M2 1l8 8M10 1L2 9" stroke="#fff" strokeWidth="2.500" /></svg>
          </button>
        </div>
      </header>
      <div className="relative min-h-0 flex-1 border border-[#37566e] bg-[#f0f0f0]">
        <div className="flex h-[180px]">
          <div className="w-[650px]">
            <div className="flex h-[61px]">
              <label htmlFor="dgia" className="w-[44px] pt-[15px] pl-[8px] text-[16px] leading-5">Giá</label>
              <input id="dgia" disabled defaultValue="0" className="mt-[9px] h-[29px] w-[62px] rounded-[2px] border border-[#afafaf] text-center text-[18px] text-[#6d6d6d]" />
              <div className="ml-[116px]">
                <h3 className="h-[38px] text-[22px] leading-[43px] font-bold whitespace-nowrap">BẢNG BÁO CÁO SX VÀNG</h3>
                <div className="flex pl-[33px]">
                  <label htmlFor="namlk" className="w-[59px] text-[16px] leading-[23px]">Năm lk</label>
                  <DateField label="namlk" spin className="w-[93px]" />
                </div>
              </div>
            </div>
            <div className="grid grid-cols-[119px_repeat(5,100px)] grid-rows-[28px_38px_26px_27px] gap-x-[6px] text-[15px] whitespace-nowrap">
              <span></span>
              <span className="leading-[31px]">KL SX(lượng)</span>
              <span className="pl-[4px] leading-[31px]">Trị giá(triệu đ)</span>
              <div className="relative h-[27px] w-[70px] border border-[#dcdfe6] border-t-[#abadb3] bg-white">
                <select aria-label="Kiểu" className="mt-[2px] ml-px h-[22px] w-[49px] appearance-none bg-[#00ffff] pl-px text-[16px] leading-[20px]"><option>Lũy kế</option></select>
                <svg width="7" height="4" viewBox="0 0 8 4" className="absolute top-[12px] right-1"><path d="M0 0h8L4 4z" /></svg>
              </div>
              <span className="leading-[31px]">Tăng giảm KL</span>
              <span className="leading-[31px]">Dự kiến KL</span>
              {sums.map(([name, color, values], row) => (
                <React.Fragment key={name}>
                  <span className={`pl-[61px] text-[16px] ${row === 2 ? "leading-[28px]" : "leading-[22px]"}`}>{name}</span>
                  {values.map((v, i) => (
                    <input key={i} aria-label={`${name} ${i + 1}`} defaultValue={v} className={`h-[19px] w-full min-w-0 border-2 border-[#e6e8ee] border-t-[#b8bac0] pl-px text-[11px] ${color} ${i === 0 ? "text-[#6d6d6d]" : ""}`} />
                  ))}
                </React.Fragment>
              ))}
            </div>
          </div>
          <div className="ml-auto flex w-[174px] flex-col gap-[6px] pt-[9px] pr-[11px] text-[16px]">
            <div className="flex justify-between"><label htmlFor="ngayin" className="leading-5">Ngày in</label><DateField label="ngayin" className="w-[99px]" /></div>
            <div className="flex justify-between"><label htmlFor="ngaycn" className="leading-5">Ngày cn</label><DateField label="ngaycn" className="w-[97px]" /></div>
            <input aria-label="Ghi chú ngày" className="h-5 w-[99px] self-end border-2 border-[#e6e8ee] border-t-[#b8bac0] bg-[#ffdead]" />
          </div>
        </div>
        <div className="flex h-[27px] items-start gap-2 pl-[388px]">
          <button className={`bg-[#00ff00] ${BTN}`}>Lưu</button>
          <button className={`bg-[#3399ff] ${BTN}`}>Clear</button>
          <button className={`bg-[#f08080] ${BTN}`}>Xóa</button>
          <input aria-label="Mã dòng" className="-mx-px h-5 w-[33px] border border-[#e3e6ee] bg-white" />
          <button className={`mt-px bg-[#ffff00] ${BTN}`}>Incopy</button>
          <button className={`mt-px bg-[#00fa9a] ${BTN}`}>toXLS</button>
        </div>
        <div className="ml-[11px] flex h-[154px] w-[848px] flex-col border border-black bg-[#f0f0f0]">
          <div className="flex h-[136px]">
            <div className="w-[830px] overflow-hidden bg-white">
              <table className="w-[830px] table-fixed border-collapse text-[11px]">
                <colgroup>
                  <col className="w-10" /><col className="w-[30px]" /><col className="w-10" /><col className="w-10" /><col className="w-10" />
                  {reportCols.slice(4, 13).map((c) => (<col key={c} className="w-[50px]" />))}
                  <col className="w-[30px]" /><col className="w-[30px]" /><col className="w-[30px]" /><col className="w-[100px]" />
                </colgroup>
                <thead>
                  <tr className="h-[22px] border-b border-[#a0a0a0]">
                    <th className="border-r border-[#e5e5e5]"></th>
                    {reportCols.map((c) => (
                      <th key={c} className="overflow-hidden border-r border-[#e0e0e4] pt-[2px] pl-[6px] text-left font-normal">{c}</th>
                    ))}
                  </tr>
                </thead>
                <tbody>
                  {reportRows.map((r, i) => (
                    <tr key={r[0]} className={`h-[22px] ${i === 0 ? "bg-[#3399ff] text-white" : ""}`}>
                      <td className={`border-r border-b border-[#e0e0e4] pl-[6px] ${i === 0 ? "bg-[#90d4f5]" : "bg-[#f8f9fb]"}`}>
                        {i === 0 && <svg width="5" height="9" viewBox="0 0 5 9"><path d="M0 0l5 4.500L0 9z" fill="#333" /></svg>}
                      </td>
                      {r.map((v, j) => (<td key={j} className="overflow-hidden border border-[#a0a0a0] pl-[3px] leading-5 whitespace-nowrap">{v}</td>))}
                    </tr>
                  ))}
                  <tr className="h-[22px]"><td></td>{reportCols.map((c) => (<td key={c} className="border border-[#a0a0a0]"></td>))}</tr>
                </tbody>
              </table>
            </div>
            <div className="flex w-[16px] flex-col items-center py-[5px]">
              <svg width="7" height="4" viewBox="0 0 8 4"><path d="M0 4l4-4 4 4z" fill="#333" /></svg>
              <div className="mt-[9px] flex h-[41px] w-[14px] items-center justify-center rounded-[2px] border border-[#9a9a9a] bg-linear-to-r from-[#f4f4f4] to-[#c9c9cb]">
                <svg width="7" height="7" viewBox="0 0 7 7"><path d="M0 .5h7M0 3.500h7M0 6.500h7" stroke="#555" /></svg>
              </div>
              <svg width="7" height="4" viewBox="0 0 8 4" className="mt-auto"><path d="M0 0h8L4 4z" fill="#333" /></svg>
            </div>
          </div>
          <div className="pr-[17px]"><HScroll thumb="w-[790px]" grip /></div>
        </div>
        <div className="absolute top-[99px] left-[115px] h-[37px] w-[416px] border-[5px] border-black bg-[#fcfcfc]" />
        <div className="absolute top-[162px] left-[117px] h-[18px] w-[376px] border-[5px] border-black bg-white" />
        <div className="absolute top-[240px] left-[38px] h-[22px] w-[699px] border-[5px] border-black bg-[repeating-linear-gradient(100deg,#ffffff00_0px,#ffffffcc_4px,#ffffff33_9px,#fff_13px),linear-gradient(#7cb8f6,#d8ebfd_60%,#fff_62%)]" />
        <div className="absolute top-[285px] left-[91px] h-[21px] w-[566px] border-[5px] border-black bg-white" />
        <div className="absolute top-[328px] left-[92px] h-[7px] w-[550px] bg-black" />
      </div>
    </div>
  );
}

export default function App() {
  return (
    <main className="flex h-screen w-full flex-col overflow-hidden">
      <Desktop id="a" time="08:12:06" className="h-[200px] shrink-0" closeStyle="bg-linear-to-b from-[#b08a86] to-[#8a3c34]" logo={<InvestingLogo />} />
      <div className="relative flex min-h-0 flex-1 flex-col overflow-hidden">
        <Desktop id="b" time="08:35:55" className="min-h-0 flex-1" closeStyle="">
          <Toolbar />
          <OrdersGrid />
          <div className="mt-[5px] ml-[14px] flex min-h-0 flex-1">
            <div className="flex w-[634px] shrink-0 flex-col">
              <CustomerPanel />
              <PledgeTable />
            </div>
            <div className="ml-1 flex min-w-0 flex-1 flex-col">
              <ItemsTable />
              <Actions />
            </div>
          </div>
        </Desktop>
        <ReportDialog />
        <div className="absolute bottom-0 left-[498px] h-[19px] w-[669px] rounded-t-[5px] border border-b-0 border-[#22303f] bg-[#4a6884]/75 shadow-[inset_0_1px_0_#ffffff88] backdrop-blur-[3px]">
          <div className="mt-[8px] mr-[9px] ml-auto h-[10px] w-[215px] rounded-t-[2px] border border-b-0 border-[#b4cce4] bg-[#6d92bc]" />
        </div>
      </div>
    </main>
  );
}
